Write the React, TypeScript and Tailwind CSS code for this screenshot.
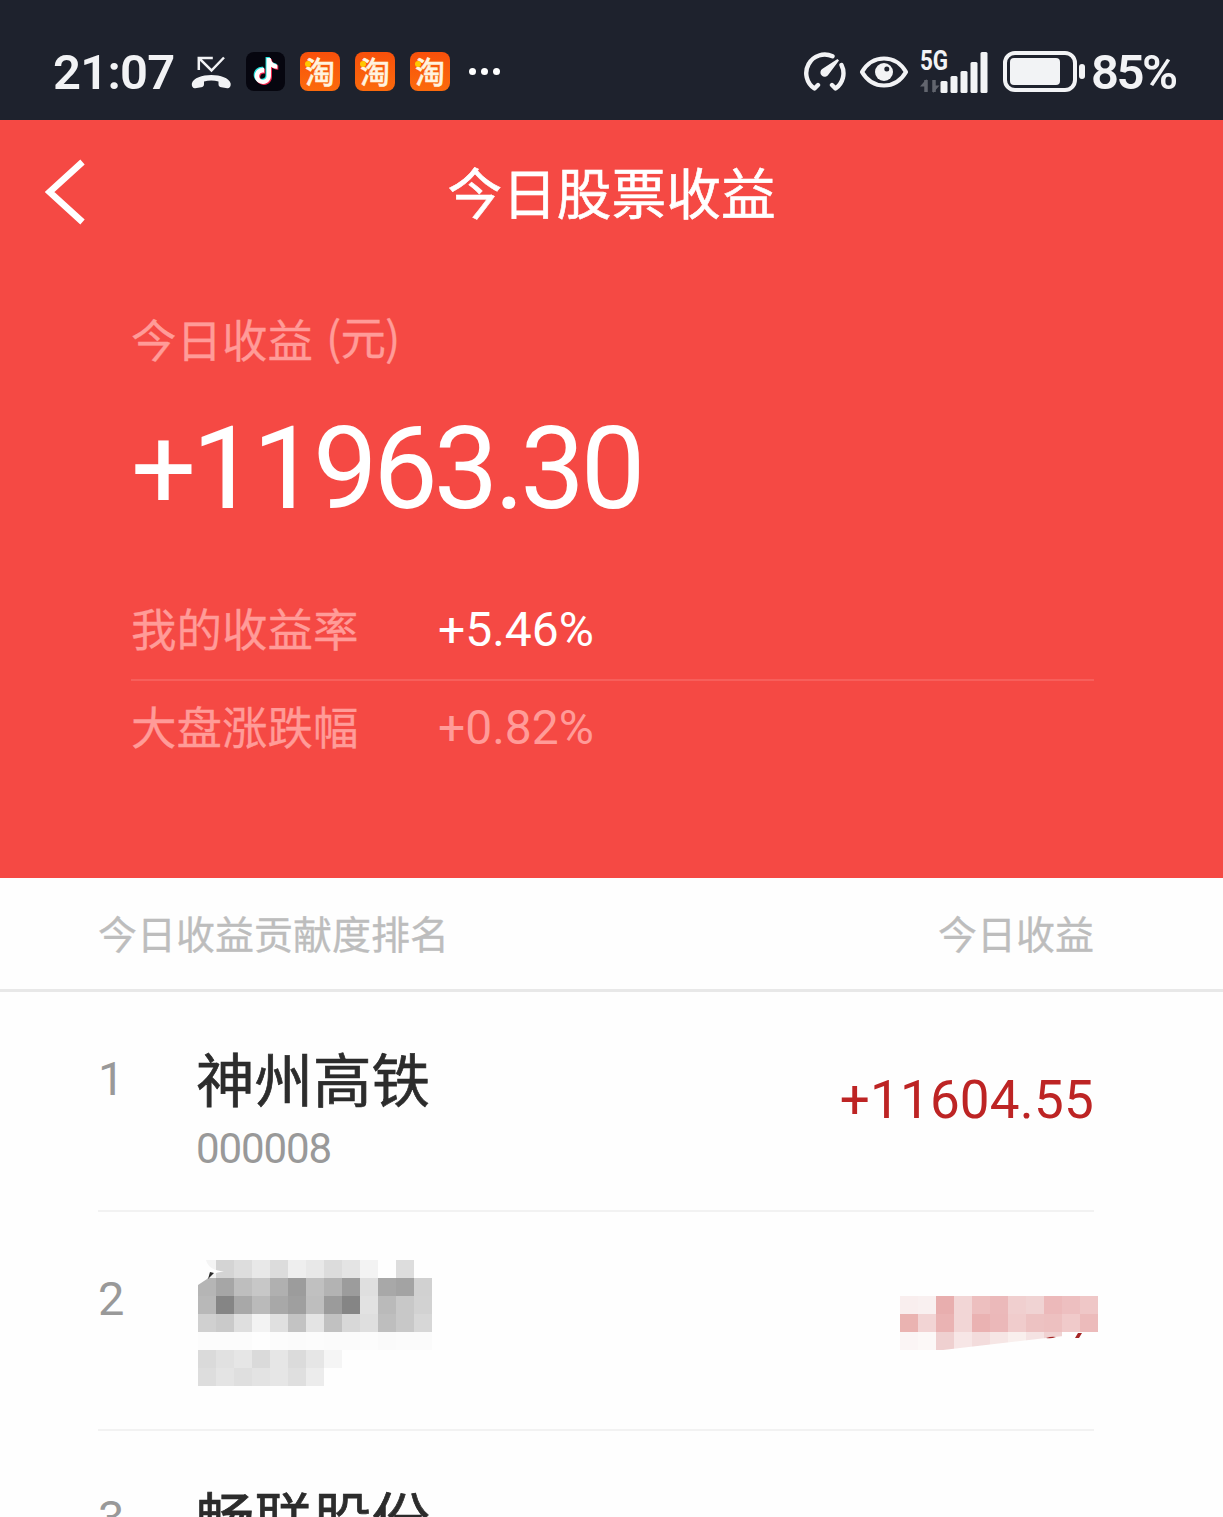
import { SiTiktok } from "react-icons/si";

const sans = "font-['Noto_Sans_CJK_SC',sans-serif]";
const num = "font-['Roboto','Noto_Sans_CJK_SC',sans-serif]";

// mosaic cells, 18px each; null is an empty cell
const nameMosaic = [
  ["#f4f4f4", "#d4d4d4", "#dddddd", "#e8e8e8", "#dcdcdc", "#eeeeee", "#e8e8e8", "#dcdcdc", "#e4e4e4", "#f3f3f3", null, "#dddddd", null],
  ["#b5b5b5", "#a6a6a6", "#bebebe", "#c7c7c7", "#b0b0b0", "#9c9c9c", "#c0c0c0", "#b3b3b3", "#9c9c9c", "#dfdfdf", "#a8a8a8", "#a3a3a3", "#d1d1d1"],
  ["#b8b8b8", "#858585", "#a8a8a8", "#bababa", "#a8a8a8", "#9f9f9f", "#bebebe", "#9b9b9b", "#858585", "#e2e2e2", "#bababa", "#c8c8c8", "#d2d2d2"],
  ["#d0d0d0", "#cacaca", "#dfdfdf", "#f3f3f3", "#e0e0e0", "#c3c3c3", "#e4e4e4", "#c1c1c1", "#d8d8d8", "#dfdfdf", "#bebebe", "#c8c8c8", "#d7d7d7"],
  ["#fcfcfc", "#fcfcfc", "#fcfcfc", null, "#fcfcfc", "#fbfbfb", "#fcfcfc", "#fbfbfb", "#fbfbfb", "#fcfcfc", "#fafafa", "#fbfbfb", "#fbfbfb"],
  ["#dadada", "#e1e1e1", "#e6e6e6", "#dadada", "#e6e6e6", "#dbdbdb", "#e6e6e6", "#f5f5f5", null, null, null, null, null],
  ["#dddddd", "#e4e4e4", "#dfdfdf", "#e3e3e3", "#e6e6e6", "#dfdfdf", "#ececec", null, null, null, null, null, null],
];

const amountMosaic = [
  ["#f9eeee", "#f9f0f0", "#e8aeae", "#f2d6d6", "#edbfbf", "#ebb9ba", "#f0cfcf", "#f0d3d3", "#ecb9ba", "#edbfc0", "#efc7c7"],
  ["#eab3b1", "#f2d4d4", "#eab3b3", "#f2d6d6", "#eab2b2", "#ebb8b9", "#f0cccc", "#edc2c2", "#edc0c0", "#f0caca", "#ecbbbb"],
  ["#fbf5f5", "#fcf8f7", "#efd0d0", "#f7e6e6", "#f3dcdc", "#f6e6e5", "#f9efed", "#f5e3e3", "#f0d2d2", null, null],
];

function Mosaic({ cells }: { cells: (string | null)[][] }) {
  return (
    <div>
      {cells.map((row, y) => (
        <div key={y} className="flex h-[18px]">
          {row.map((c, x) => (
            <span key={x} className="w-[18px]" style={{ backgroundColor: c ?? "transparent" }} />
          ))}
        </div>
      ))}
    </div>
  );
}

function MissedCall() {
  return (
    <svg viewBox="0 0 40 34" className="h-[34px] w-10" fill="none">
      <path d="M7.800 15V3h14M8 3.200 20.500 15.500 33 2.500" stroke="#f2f3f5" strokeWidth="2.500" />
      <path
        d="M1 28C2.500 23 11 20 20.300 20S38 23 39.500 28c.7 3-.6 5.500-3.200 5.200l-6-1c-1.800-.3-2.800-1.200-2.800-3v-2.700c-4.500-1.300-10-1.300-14.500 0v2.700c0 1.800-1 2.700-2.800 3l-6 1C1.600 33.500.3 31 1 28z"
        fill="#f2f3f5"
      />
    </svg>
  );
}

function TaobaoIcon() {
  return (
    <div className="relative h-[39px] w-10 rounded-lg bg-linear-to-b from-[#f8500b] to-[#fb6a0c]">
      <span className={`${sans} absolute top-[3px] left-[5px] text-[30px] leading-[30px] font-medium text-[#fff3df] [-webkit-text-stroke:0.4px]`}>
        淘
      </span>
      <span className="absolute top-[9px] left-[5px] size-[6px] rounded-full bg-[#ffc800]" />
    </div>
  );
}

function TiktokIcon() {
  return (
    <div className="relative size-[39px] rounded-lg bg-[#06060f]">
      <SiTiktok className="absolute top-[5px] left-[6px] size-[26px] text-[#25e5e0]" />
      <SiTiktok className="absolute top-[7px] left-[8px] size-[26px] text-[#f5284f]" />
      <SiTiktok className="absolute top-[6px] left-[7px] size-[26px] text-white" />
    </div>
  );
}

function Gauge() {
  return (
    <svg viewBox="0 0 42 40" className="h-10 w-[42px]" fill="none">
      <path
        d="M28.500 4.300A18.500 18.500 0 0 0 10.500 36.500L14 33M37.500 13A18.500 18.500 0 0 1 31.500 36.500L28 33"
        stroke="#f2f3f5"
        strokeWidth="4.400"
        strokeLinejoin="round"
        strokeLinecap="round"
      />
      <path d="m33.500 7 1.500 1.400-10.500 14a4.300 4.300 0 1 1-6-5.700z" fill="#f2f3f5" />
    </svg>
  );
}

function Eye() {
  return (
    <svg viewBox="0 0 50 34" className="h-[34px] w-[50px]" fill="none">
      <path
        d="M3 17C8 8.500 15.500 3.500 25 3.500S42 8.500 47 17C42 25.500 34.500 30.500 25 30.500S8 25.500 3 17z"
        stroke="#f2f3f5"
        strokeWidth="4.200"
        strokeLinejoin="round"
      />
      <circle cx="25" cy="17" r="9" fill="#f2f3f5" />
      <circle cx="27.800" cy="14" r="2.500" fill="#1e222d" />
    </svg>
  );
}

function Signal() {
  return (
    <div className="relative h-[42px] w-[68px]">
      <span className={`${num} absolute -top-[3px] left-0 origin-left scale-x-[0.83] text-[27px] leading-none font-bold text-[#f2f3f5]`}>
        5G
      </span>
      <svg viewBox="0 0 68 42" className="absolute inset-0" fill="#f2f3f5">
        <path d="M6 29v12M14 29v12" stroke="#62656e" strokeWidth="3.500" />
        <path d="M0 35.500 6.500 28v7.500zM19.500 34.500 13 42v-7.500z" fill="#62656e" />
        <rect x="20.500" y="30" width="7" height="12" rx="1.500" />
        <rect x="30.500" y="25" width="7" height="17" rx="1.500" />
        <rect x="40.500" y="20" width="7" height="22" rx="1.500" />
        <rect x="50.500" y="11" width="7" height="31" rx="1.500" />
        <rect x="60.500" y="1" width="7" height="41" rx="1.500" />
      </svg>
    </div>
  );
}

function Battery() {
  return (
    <div className="flex items-center gap-[2px]">
      <div className="h-[41px] w-[74px] rounded-[12px] border-4 border-[#f2f3f5] p-[3px]">
        <div className="h-[27px] w-[50px] rounded-[4px] bg-[#f2f3f5]" />
      </div>
      <div className="h-[15px] w-[6px] rounded-[3px] bg-[#f2f3f5]" />
    </div>
  );
}

function StatusBar() {
  return (
    <div className="flex h-[120px] justify-between bg-[#1e222d] pt-[50px] pr-[45px] pl-[53px] text-[#f2f3f5]">
      <div className="flex h-[43px] items-center">
        <span className={`${num} w-[138px] pt-[2px] text-[49px] leading-none font-semibold tracking-[-0.800px]`}>21:07</span>
        <MissedCall />
        <div className="ml-[15px] flex gap-[15px]">
          <TiktokIcon />
          <TaobaoIcon />
          <TaobaoIcon />
          <TaobaoIcon />
        </div>
        <div className="ml-[19px] flex gap-[5px]">
          <span className="size-[7px] rounded-full bg-white" />
          <span className="size-[7px] rounded-full bg-white" />
          <span className="size-[7px] rounded-full bg-white" />
        </div>
      </div>
      <div className="flex h-[43px] items-center">
        <Gauge />
        <div className="ml-[13px]">
          <Eye />
        </div>
        <div className="ml-[11px]">
          <Signal />
        </div>
        <div className="ml-[15px]">
          <Battery />
        </div>
        <span className={`${num} ml-[6px] w-[87px] pt-[2px] text-[49px] leading-none font-semibold tracking-[-2.500px]`}>85%</span>
      </div>
    </div>
  );
}

function Summary() {
  return (
    <section className="h-[758px] bg-[#f54944] text-white">
      <header className="relative flex h-[146px] items-center justify-center">
        <svg viewBox="0 0 40 66" className="absolute top-[39px] left-[45px] h-[66px] w-10" fill="none">
          <path d="M37.500 3 4.500 33l33 30" stroke="#fff" strokeWidth="6.500" />
        </svg>
        <h1 className="-mt-[3px] text-[54.700px] leading-none [-webkit-text-stroke:0.6px]">今日股票收益</h1>
      </header>
      <div className="pr-[129px] pl-[131px]">
        <div className="mt-[49px] h-[46px] text-[45.500px] leading-[46px] whitespace-pre text-[#ff9b98] [-webkit-text-stroke:0.3px]">
          今日收益<span className="relative -top-[3px] ml-[13px] tracking-[-1px]">(元)</span>
        </div>
        <div className={`${num} mt-[50px] h-[115px] text-[115px] leading-[115px] tracking-[-4.200px]`}>+11963.30</div>
        <div className="mt-[55px] flex h-[100px] items-center border-b-2 border-[#f75f5b] text-[45.500px] leading-none">
          <span className="-mt-[4px] w-[307px] text-[#ff9b98] [-webkit-text-stroke:0.3px]">我的收益率</span>
          <span className={`${num} text-[48px]`}>+5.46%</span>
        </div>
        <div className="flex h-[94px] items-center text-[45.500px] leading-none text-[#ff9b98]">
          <span className="-mt-[4px] w-[307px] [-webkit-text-stroke:0.3px]">大盘涨跌幅</span>
          <span className={`${num} text-[48px]`}>+0.82%</span>
        </div>
      </div>
    </section>
  );
}

const rowClass = "flex border-b-2 border-[#f2f2f2]";
const rankClass = `${num} w-[98px] pt-[63px] text-[47px] leading-[47px] text-[#999]`;
const nameClass = "mt-[55px] text-[58.500px] leading-[59px] text-[#2c2c2c] [-webkit-text-stroke:0.7px]";

export default function App() {
  return (
    <main className={`${sans} h-[1517px] w-[1223px] overflow-hidden bg-[#fefefe]`}>
      <StatusBar />
      <Summary />
      <div className="flex h-[114px] items-center justify-between border-b-3 border-[#e8e8e8] pr-[129px] pb-[2px] pl-[98px] text-[39px] leading-none text-[#bdbdbd] [-webkit-text-stroke:0.3px]">
        <span>今日收益贡献度排名</span>
        <span>今日收益</span>
      </div>
      <div className="pr-[129px] pl-[98px]">
        <div className={`${rowClass} h-[220px]`}>
          <span className={rankClass}>1</span>
          <div>
            <div className={nameClass}>神州高铁</div>
            <div className={`${num} mt-[22px] text-[42px] leading-[42px] tracking-[-1.100px] text-[#999]`}>000008</div>
          </div>
          <span className={`${num} mt-[82px] ml-auto text-[53px] leading-[53px] tracking-[0.200px] text-[#bd2424]`}>+11604.55</span>
        </div>
        <div className={`${rowClass} h-[219px]`}>
          <span className={rankClass}>2</span>
          <div className="relative mt-[48px] ml-[2px]">
            <Mosaic cells={nameMosaic} />
            <svg viewBox="0 0 30 26" className="absolute top-0 left-0 h-[26px] w-[30px]">
              <path d="M0 0h8q2 10 18 11.500Q12 13 9 19L0 25z" fill="#fefefe" />
              <path d="m10 19 2-7 4 1z" fill="#2c2c2c" />
            </svg>
          </div>
          <div className="relative mt-[84px] mr-[-4px] ml-auto">
            <Mosaic cells={amountMosaic} />
            <svg viewBox="0 0 198 54" className="absolute top-0 left-0 h-[54px] w-[198px]">
              <path d="M43 54 198 36v18z" fill="#fefefe" />
              <path d="M146 42q6-2 10-1-5 2-10 1M175 42l3-5h4l-3 5z" fill="#a52626" />
            </svg>
          </div>
        </div>
        <div className="flex h-[219px]">
          <span className={rankClass}>3</span>
          <div className={nameClass}>畅联股份</div>
        </div>
      </div>
    </main>
  );
}
